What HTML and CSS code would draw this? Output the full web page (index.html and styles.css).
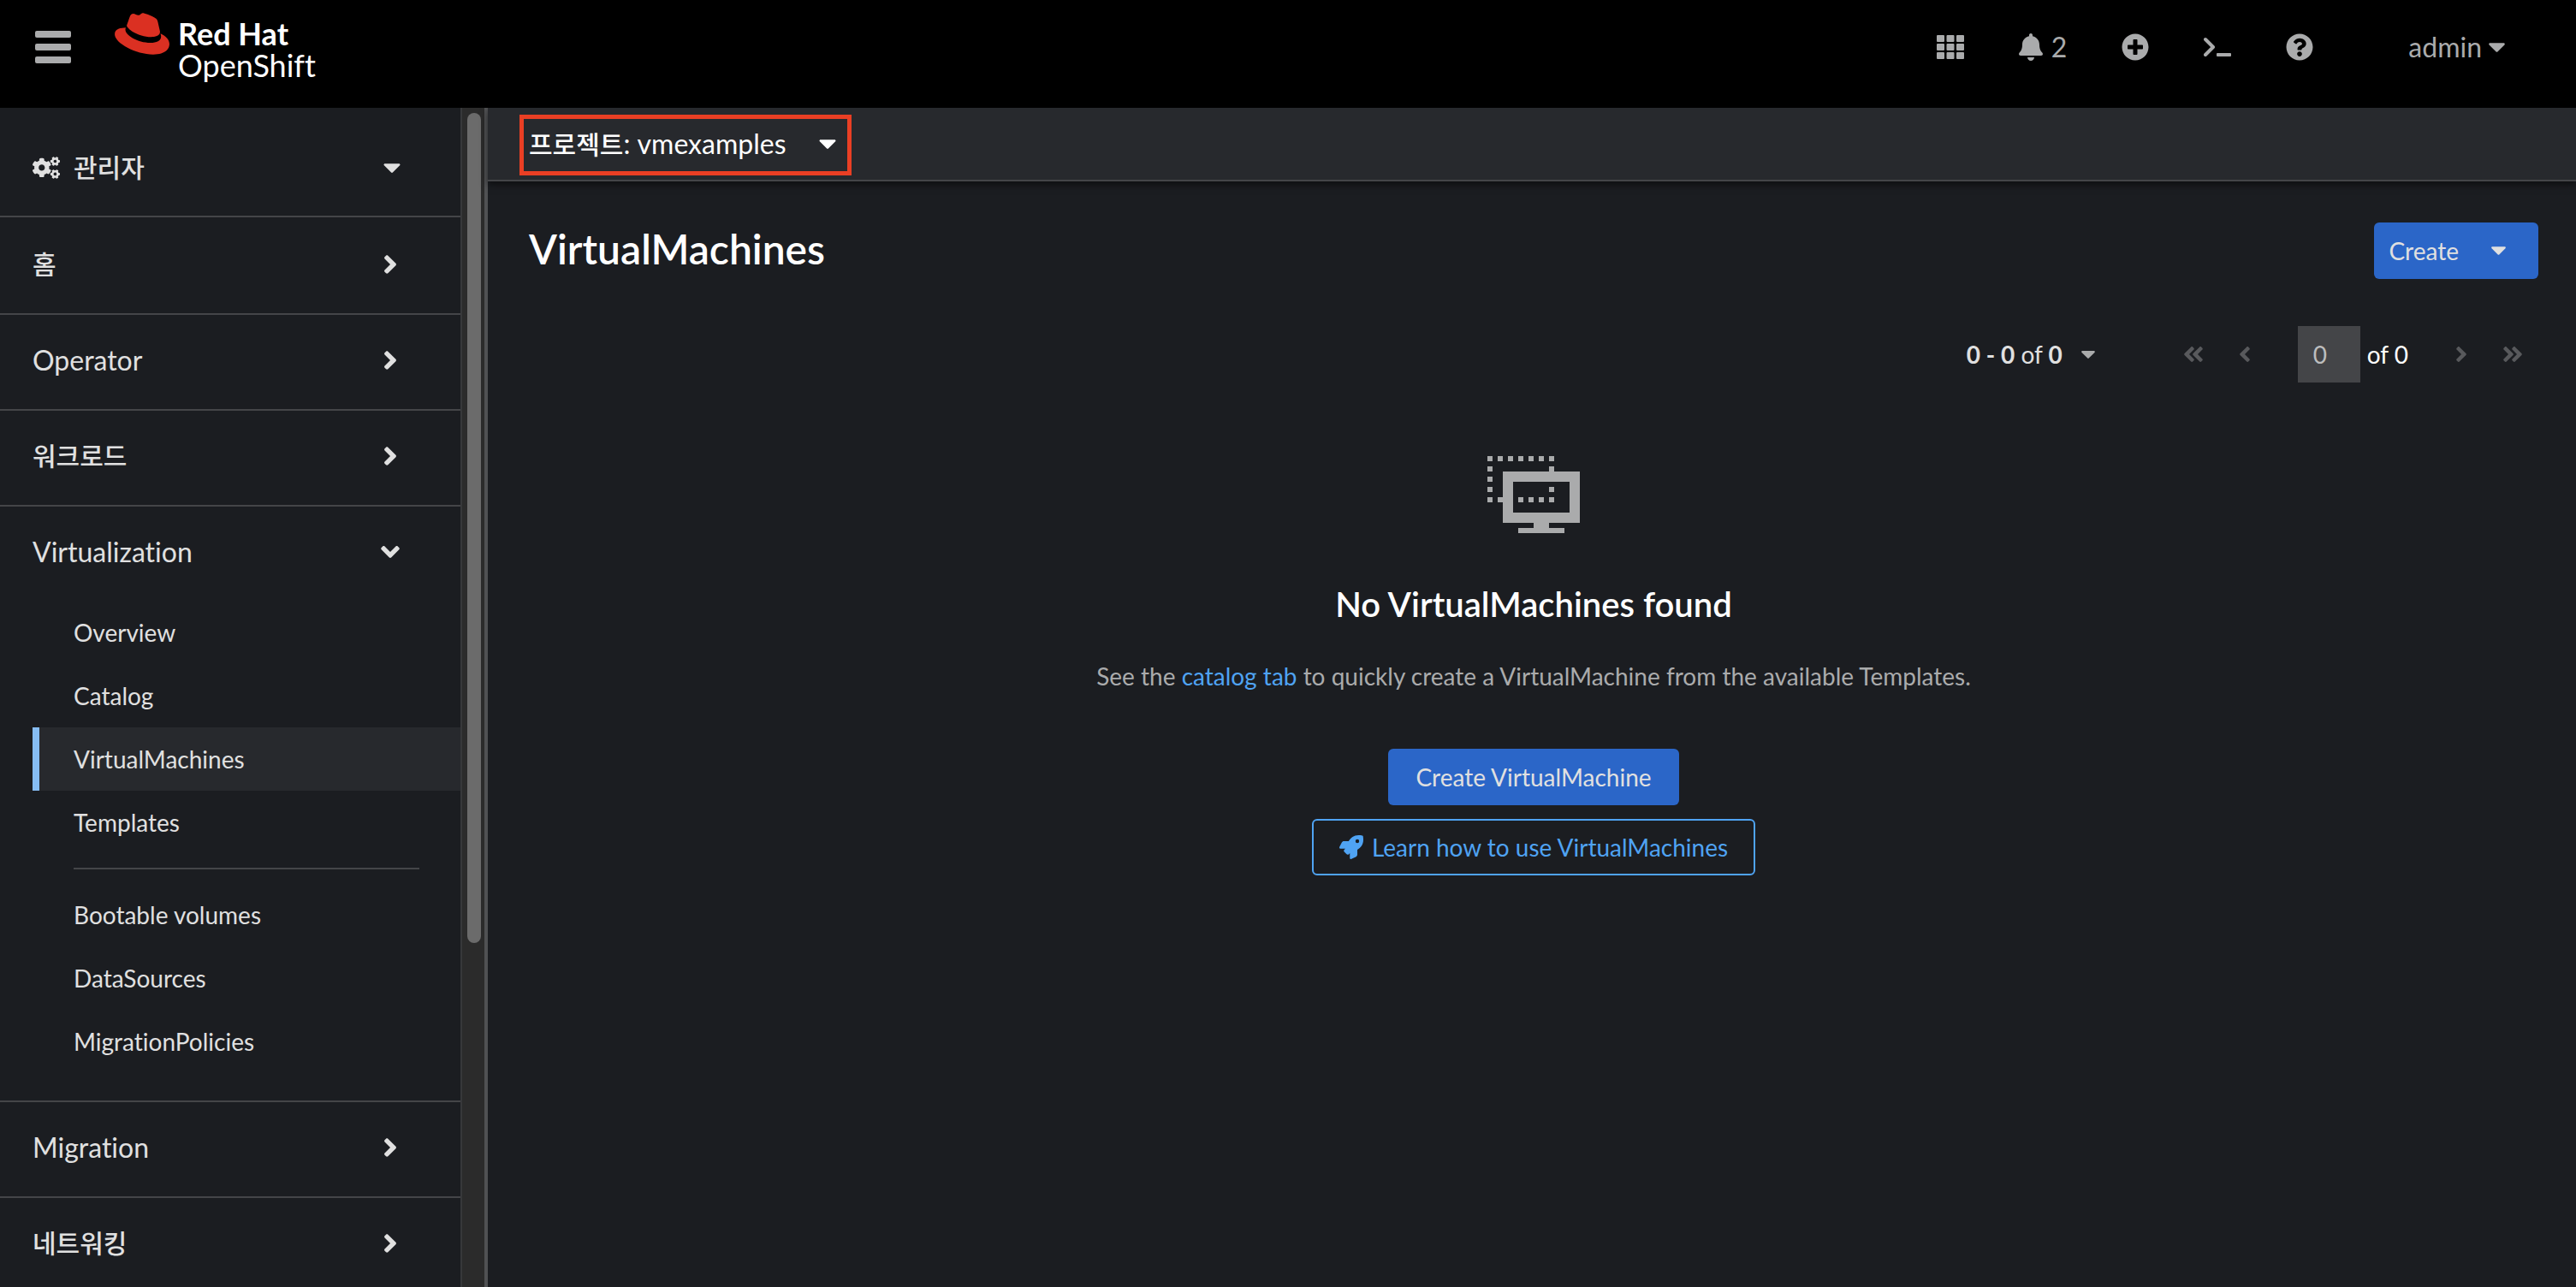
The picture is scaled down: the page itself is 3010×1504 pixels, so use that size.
FILE: index.html
```html
<!DOCTYPE html>
<html lang="ko">
<head>
<meta charset="utf-8">
<title>VirtualMachines · Red Hat OpenShift</title>
<meta name="viewport" content="width=device-width, initial-scale=1">
<link rel="stylesheet" href="styles.css">
</head>
<body>
<svg class="sprite" aria-hidden="true">
  <symbol id="caret" viewBox="8 190 304 172"><path d="M31.3 192h257.3c17.8 0 26.7 21.5 14.1 34.1L174.1 354.8c-7.8 7.8-20.5 7.8-28.3 0L17.2 226.1C4.6 213.5 13.5 192 31.3 192z"/></symbol>
  <symbol id="angle" viewBox="24 96 208 320"><path d="M224.3 273l-136 136c-9.4 9.4-24.6 9.4-33.9 0l-22.6-22.6c-9.4-9.4-9.4-24.6 0-33.9l96.4-96.4-96.4-96.4c-9.4-9.4-9.4-24.6 0-33.9L54.3 103c9.4-9.4 24.6-9.4 33.9 0l136 136c9.5 9.4 9.5 24.6.1 34z"/></symbol>
</svg>

<header class="masthead">
  <button class="menu-toggle" type="button" aria-label="Global navigation">
    <svg width="42" height="38" viewBox="0 0 42 38"><rect width="42" height="8" rx="2"/><rect y="15" width="42" height="8" rx="2"/><rect y="30" width="42" height="8" rx="2"/></svg>
  </button>
  <a class="brand" href="#" aria-label="Red Hat OpenShift">
    <svg class="brand-hat" width="64" height="49" viewBox="0 2.8 24 18.4"><path d="M16.009 13.386c1.577 0 3.86-.326 3.86-2.202a1.765 1.765 0 0 0-.04-.431l-.94-4.08c-.216-.898-.406-1.305-1.982-2.093-1.223-.625-3.888-1.658-4.676-1.658-.733 0-.947.946-1.822.946-.842 0-1.467-.706-2.255-.706-.757 0-1.25.515-1.63 1.576 0 0-1.06 2.99-1.197 3.424a.81.81 0 0 0-.028.245c0 1.162 4.577 4.974 10.71 4.974m4.101-1.435c.218 1.032.218 1.14.218 1.277 0 1.765-1.984 2.745-4.593 2.745-5.895.004-11.06-3.451-11.06-5.734a2.326 2.326 0 0 1 .19-.925C2.746 9.415 0 9.794 0 12.217c0 3.969 9.405 8.861 16.851 8.861 5.71 0 7.149-2.582 7.149-4.62 0-1.605-1.387-3.425-3.887-4.512"/></svg>
    <span class="brand-text"><strong>Red Hat</strong><span>OpenShift</span></span>
  </a>
  <div class="tools">
    <button class="tool" type="button" aria-label="Applications">
      <svg width="32" height="28" viewBox="0 0 32 28"><rect width="9" height="8" rx="1"/><rect x="11.500" width="9" height="8" rx="1"/><rect x="23" width="9" height="8" rx="1"/><rect y="10" width="9" height="8" rx="1"/><rect x="11.500" y="10" width="9" height="8" rx="1"/><rect x="23" y="10" width="9" height="8" rx="1"/><rect y="20" width="9" height="8" rx="1"/><rect x="11.500" y="20" width="9" height="8" rx="1"/><rect x="23" y="20" width="9" height="8" rx="1"/></svg>
    </button>
    <button class="tool" type="button" aria-label="Notifications, 2">
      <svg width="28" height="32" viewBox="0 0 448 512"><path d="M224 512c35.320 0 63.970-28.650 63.970-64H160.030c0 35.350 28.650 64 63.970 64zm215.390-149.710c-19.320-20.760-55.470-51.990-55.470-154.290 0-77.700-54.480-139.900-127.940-155.160V32c0-17.670-14.320-32-31.980-32s-31.980 14.330-31.980 32v20.840C118.560 68.100 64.080 130.300 64.080 208c0 102.300-36.150 133.530-55.470 154.290-6 6.450-8.660 14.160-8.610 21.710.110 16.400 12.980 32 32.100 32h383.800c19.120 0 32-15.600 32.100-32 .050-7.550-2.610-15.270-8.610-21.710z"/></svg>
      <span>2</span>
    </button>
    <button class="tool" type="button" aria-label="Quick create">
      <svg width="32" height="32" viewBox="0 0 512 512"><path d="M256 8C119 8 8 119 8 256s111 248 248 248 248-111 248-248S393 8 256 8zm144 276c0 6.600-5.400 12-12 12h-92v92c0 6.600-5.400 12-12 12h-56c-6.600 0-12-5.400-12-12v-92h-92c-6.600 0-12-5.400-12-12v-56c0-6.600 5.400-12 12-12h92v-92c0-6.600 5.400-12 12-12h56c6.600 0 12 5.400 12 12v92h92c6.600 0 12 5.400 12 12v56z"/></svg>
    </button>
    <button class="tool" type="button" aria-label="Command line terminal">
      <svg width="32" height="24" viewBox="0 0 32 24"><path class="stroke" d="M2 3l9 9-9 9"/><rect x="15" y="19" width="17" height="4" rx="1"/></svg>
    </button>
    <button class="tool" type="button" aria-label="Help">
      <svg width="32" height="32" viewBox="0 0 512 512"><path d="M504 256c0 136.997-111.043 248-248 248S8 392.997 8 256C8 119.083 119.043 8 256 8s248 111.083 248 248zM262.655 90c-54.497 0-89.255 22.957-116.549 63.758-3.536 5.286-2.353 12.415 2.715 16.258l34.699 26.310c5.205 3.947 12.621 3.008 16.665-2.122 17.864-22.658 30.113-35.797 57.303-35.797 20.429 0 45.698 13.148 45.698 32.958 0 14.976-12.363 22.667-32.534 33.976C247.128 238.528 216 254.941 216 296v4c0 6.627 5.373 12 12 12h56c6.627 0 12-5.373 12-12v-1.333c0-28.462 83.186-29.647 83.186-106.667 0-58.002-60.165-102-116.531-102zM256 338c-25.365 0-46 20.635-46 46 0 25.364 20.635 46 46 46s46-20.636 46-46c0-25.365-20.635-46-46-46z"/></svg>
    </button>
    <button class="tool user" type="button" aria-haspopup="menu"><span>admin</span><svg width="19" height="11"><use href="#caret"/></svg></button>
  </div>
</header>

<div class="shell">
  <nav class="sidebar" aria-label="Navigation">
    <button class="perspective" type="button" aria-haspopup="listbox">
      <svg width="32" height="26" viewBox="0 0 640 512"><path d="M512.100 191l-8.200 14.300c-3 5.300-9.400 7.500-15.100 5.400-11.800-4.400-22.600-10.700-32.100-18.600-4.600-3.800-5.800-10.500-2.800-15.700l8.200-14.300c-6.900-8-12.300-17.300-15.900-27.400h-16.500c-6 0-11.200-4.300-12.200-10.300-2-12-2.100-24.600 0-37.100 1-6 6.200-10.400 12.200-10.400h16.500c3.600-10.100 9-19.400 15.900-27.400l-8.200-14.300c-3-5.200-1.900-11.900 2.800-15.700 9.500-7.900 20.400-14.200 32.100-18.600 5.700-2.100 12.100.1 15.100 5.400l8.200 14.300c10.500-1.900 21.200-1.900 31.700 0L552 6.300c3-5.300 9.400-7.500 15.100-5.400 11.800 4.400 22.600 10.700 32.100 18.600 4.600 3.800 5.800 10.500 2.800 15.700l-8.200 14.300c6.900 8 12.300 17.300 15.900 27.400h16.500c6 0 11.200 4.300 12.200 10.300 2 12 2.100 24.600 0 37.100-1 6-6.200 10.400-12.200 10.400h-16.500c-3.600 10.100-9 19.400-15.900 27.400l8.200 14.300c3 5.200 1.900 11.900-2.800 15.700-9.500 7.900-20.400 14.200-32.100 18.600-5.700 2.100-12.100-.1-15.100-5.400l-8.200-14.300c-10.400 1.900-21.200 1.900-31.700 0zm-10.500-58.800c38.500 29.600 82.400-14.300 52.800-52.800-38.500-29.700-82.400 14.300-52.800 52.800zM386.300 286.100l33.700 16.800c10.100 5.800 14.500 18.100 10.500 29.100-8.900 24.200-26.400 46.400-42.600 65.800-7.400 8.900-20.200 11.100-30.300 5.300l-29.100-16.800c-16 13.700-34.600 24.600-54.900 31.700v33.600c0 11.600-8.300 21.600-19.700 23.600-24.600 4.200-50.400 4.400-75.900 0-11.500-2-20-11.900-20-23.600V418c-20.300-7.200-38.900-18-54.900-31.700L74 403c-10 5.800-22.900 3.600-30.300-5.300-16.200-19.400-33.300-41.600-42.200-65.700-4-10.900.4-23.200 10.500-29.100l33.300-16.800c-3.900-20.900-3.900-42.400 0-63.400L12 205.800c-10.100-5.800-14.600-18.100-10.500-29 8.900-24.200 26-46.400 42.200-65.800 7.400-8.900 20.200-11.100 30.300-5.300l29.100 16.800c16-13.700 34.600-24.600 54.900-31.700V57.100c0-11.500 8.200-21.500 19.600-23.500 24.600-4.200 50.500-4.400 76-.1 11.500 2 20 11.900 20 23.600v33.600c20.300 7.200 38.900 18 54.900 31.700l29.100-16.800c10-5.800 22.900-3.600 30.300 5.300 16.200 19.400 33.200 41.600 42.100 65.800 4 10.900.1 23.200-10 29.100l-33.700 16.800c3.900 21 3.900 42.500 0 63.500zm-117.600 21.100c59.200-77-28.700-164.900-105.700-105.700-59.200 77 28.700 164.900 105.700 105.700zm243.400 182.700l-8.200 14.300c-3 5.300-9.400 7.500-15.100 5.400-11.800-4.400-22.600-10.700-32.100-18.600-4.600-3.800-5.800-10.500-2.800-15.700l8.200-14.300c-6.900-8-12.300-17.300-15.900-27.400h-16.500c-6 0-11.200-4.300-12.200-10.300-2-12-2.100-24.600 0-37.100 1-6 6.200-10.400 12.200-10.400h16.500c3.600-10.100 9-19.400 15.900-27.400l-8.200-14.300c-3-5.200-1.900-11.900 2.800-15.700 9.500-7.900 20.400-14.200 32.100-18.600 5.700-2.100 12.100.1 15.100 5.400l8.200 14.300c10.500-1.900 21.200-1.900 31.700 0l8.200-14.300c3-5.300 9.400-7.500 15.100-5.400 11.800 4.400 22.600 10.700 32.100 18.600 4.600 3.800 5.800 10.500 2.800 15.700l-8.200 14.300c6.900 8 12.300 17.300 15.900 27.400h16.500c6 0 11.200 4.300 12.200 10.300 2 12 2.100 24.600 0 37.100-1 6-6.200 10.400-12.200 10.400h-16.500c-3.600 10.100-9 19.400-15.900 27.400l8.200 14.300c3 5.200 1.900 11.900-2.800 15.700-9.500 7.900-20.400 14.200-32.100 18.600-5.700 2.100-12.100-.1-15.100-5.400l-8.200-14.300c-10.400 1.900-21.200 1.900-31.700 0zM501.600 431c38.500 29.600 82.400-14.300 52.800-52.800-38.500-29.600-82.400 14.300-52.800 52.800z"/></svg>
      <span class="ko">관리자</span>
      <svg class="perspective-caret" width="20" height="11"><use href="#caret"/></svg>
    </button>
    <ul class="nav-list">
      <li class="nav-section"><button type="button" aria-expanded="false"><span class="ko">홈</span><svg class="chevron" width="14" height="22"><use href="#angle"/></svg></button></li>
      <li class="nav-section"><button type="button" aria-expanded="false"><span>Operator</span><svg class="chevron" width="14" height="22"><use href="#angle"/></svg></button></li>
      <li class="nav-section"><button type="button" aria-expanded="false"><span class="ko">워크로드</span><svg class="chevron" width="14" height="22"><use href="#angle"/></svg></button></li>
      <li class="nav-section">
        <button type="button" aria-expanded="true"><span>Virtualization</span><svg class="chevron" width="14" height="22"><use href="#angle"/></svg></button>
        <ul class="subnav">
          <li><a href="#">Overview</a></li>
          <li><a href="#">Catalog</a></li>
          <li><a href="#" aria-current="page">VirtualMachines</a></li>
          <li><a href="#">Templates</a></li>
          <li class="divider" role="separator"></li>
          <li><a href="#">Bootable volumes</a></li>
          <li><a href="#">DataSources</a></li>
          <li><a href="#">MigrationPolicies</a></li>
        </ul>
      </li>
      <li class="nav-section"><button type="button" aria-expanded="false"><span>Migration</span><svg class="chevron" width="14" height="22"><use href="#angle"/></svg></button></li>
      <li class="nav-section"><button type="button" aria-expanded="false"><span class="ko">네트워킹</span><svg class="chevron" width="14" height="22"><use href="#angle"/></svg></button></li>
    </ul>
  </nav>
  <div class="scrollbar" aria-hidden="true"><div class="scrollbar-thumb"></div></div>

  <div class="content">
    <div class="project-bar">
      <button class="project-select" type="button" aria-haspopup="listbox"><span><span class="ko">프로젝트</span>: vmexamples</span><svg width="20" height="11"><use href="#caret"/></svg></button>
    </div>
    <main class="page">
      <div class="page-head">
        <h1>VirtualMachines</h1>
        <button class="btn create" type="button" aria-haspopup="menu"><span>Create</span><svg width="17" height="10"><use href="#caret"/></svg></button>
      </div>
      <div class="pagination">
        <button class="page-range" type="button" aria-haspopup="menu"><span><b>0 - 0</b> of <b>0</b></span><svg width="16" height="9"><use href="#caret"/></svg></button>
        <div class="pager">
          <button class="step back" type="button" disabled aria-label="First page"><svg width="12" height="18"><use href="#angle"/></svg><svg width="12" height="18"><use href="#angle"/></svg></button>
          <button class="step back" type="button" disabled aria-label="Previous page"><svg width="12" height="18"><use href="#angle"/></svg></button>
          <label class="current"><input type="text" value="0" aria-label="Current page"><span>of 0</span></label>
          <button class="step" type="button" disabled aria-label="Next page"><svg width="12" height="18"><use href="#angle"/></svg></button>
          <button class="step" type="button" disabled aria-label="Last page"><svg width="12" height="18"><use href="#angle"/></svg><svg width="12" height="18"><use href="#angle"/></svg></button>
        </div>
      </div>
      <section class="empty">
        <svg class="empty-icon" width="108" height="90" viewBox="0 0 108 90">
          <path d="M3 0v54" class="dots"/><path d="M75 0v54" class="dots"/>
          <path d="M0 3h78" class="dots"/><path d="M0 51h78" class="dots"/>
          <path fill-rule="evenodd" d="M18 18h90v60H72v6h18v6H36v-6h18v-6H18zM30 30v36h66V30z"/>
        </svg>
        <h2>No VirtualMachines found</h2>
        <p>See the <a href="#">catalog tab</a> to quickly create a VirtualMachine from the available Templates.</p>
        <div class="actions">
          <button class="btn" type="button">Create VirtualMachine</button>
          <button class="btn outlined" type="button">
            <svg width="28" height="28" viewBox="0 0 512 512"><path d="M505.120 19.094c-1.189-5.531-6.658-11-12.207-12.188C460.716 0 435.507 0 410.407 0 307.175 0 245.269 55.203 199.052 128H94.838c-16.348.016-35.557 11.875-42.887 26.484L2.516 253.297A28.400 28.400 0 0 0 0 264a24.009 24.009 0 0 0 24.006 24h103.810l-22.475 22.469c-11.365 11.361-12.996 32.258 0 45.250l50.905 50.906c11.156 11.188 32.156 13.156 45.277 0l22.475-22.469V488a24.009 24.009 0 0 0 24.006 24 28.559 28.559 0 0 0 10.707-2.516l98.728-49.391c14.629-7.297 26.508-26.500 26.508-42.859V312.797c72.598-46.313 128.035-108.406 128.035-211.094.093-25.203.093-50.406-6.862-82.609zM384.040 168A40 40 0 1 1 424.050 128 40.023 40.023 0 0 1 384.040 168z"/></svg>
            <span>Learn how to use VirtualMachines</span>
          </button>
        </div>
      </section>
    </main>
  </div>
</div>
</body>
</html>
```
FILE: styles.css
```css
:root {
  --bg: #1b1d21;
  --bg-raised: #27292d;
  --line: #444548;
  --text: #e0e0e0;
  --muted: #aaabac;
  --blue: #2b66c8;
  --link: #4fa3f3;
}

* { box-sizing: border-box; }

body {
  margin: 0;
  height: 100vh;
  display: flex;
  flex-direction: column;
  overflow: hidden;
  background: var(--bg);
  color: var(--text);
  font: 28px/42px Lato, "Noto Sans CJK KR", sans-serif;
  font-variant-ligatures: none;
}

button, input {
  margin: 0;
  padding: 0;
  border: 0;
  background: none;
  color: inherit;
  font: inherit;
}

svg { display: block; flex: none; fill: currentColor; }
ul { margin: 0; padding: 0; list-style: none; }
h1, h2, p { margin: 0; }
h1, h2 { color: #fff; font-weight: 600; }
a { color: var(--link); text-decoration: none; }

.sprite { position: absolute; width: 0; height: 0; }
.ko { font-family: "Noto Sans CJK KR", sans-serif; font-size: 30px; font-weight: 500; line-height: 36px; }

/* Masthead */
.masthead {
  flex: none;
  display: flex;
  align-items: center;
  height: 126px;
  padding: 0 83px 16px 41px;
  background: #000;
  color: var(--muted);
  font-size: 32px;
}
.brand {
  display: flex;
  gap: 10px;
  margin-left: 51px;
  color: #fff;
  font-size: 36px;
  line-height: 37px;
}
.brand-hat { color: #db3022; }
.brand-text { display: flex; flex-direction: column; padding-top: 6px; }
.tools { display: flex; align-items: center; gap: 64px; margin-left: auto; }
.tool { display: flex; align-items: center; gap: 10px; }
.user { gap: 8px; margin-left: 47px; }
.stroke { fill: none; stroke: currentColor; stroke-width: 4; stroke-linecap: round; stroke-linejoin: round; }

/* Shell */
.shell { flex: 1; display: flex; min-height: 0; }
.sidebar { flex: none; width: 538px; overflow: hidden; font-size: 32px; }
.scrollbar {
  flex: none;
  width: 32px;
  padding: 6px 4px 6px 6px;
  border-left: 2px solid #37383a;
  border-right: 4px solid #505153;
  background: #2b2b2b;
}
.scrollbar-thumb { width: 16px; height: 71%; border-radius: 8px; background: #6b6b6b; }

/* Sidebar */
.perspective, .nav-section > button { display: flex; align-items: center; width: 100%; }
.perspective { gap: 16px; height: 126px; padding: 14px 70px 0 38px; }
.perspective-caret { margin-left: auto; }
.perspective .ko, .nav-section .ko { padding-bottom: 4px; }
.nav-list { border-top: 2px solid var(--line); }
.nav-section { border-bottom: 2px solid var(--line); }
.nav-section > button { justify-content: space-between; height: 110px; padding: 0 75px 4px 38px; }
.nav-section:first-child { padding-top: 2px; }
.nav-section [aria-expanded="true"] .chevron { transform: rotate(90deg); }
.subnav { padding-bottom: 32px; font-size: 28px; }
.subnav a { display: block; margin-left: 38px; padding: 16px 40px; border-left: 8px solid transparent; color: var(--text); }
.subnav [aria-current] { border-color: #86bdf4; background: var(--bg-raised); }
.divider { height: 2px; margin: 16px 48px 16px 86px; background: var(--line); }

/* Project bar */
.content { flex: 1; min-width: 0; }
.project-bar {
  display: flex;
  padding: 8px 37px 5px;
  border-bottom: 2px solid var(--line);
  background: var(--bg-raised);
  box-shadow: 0 4px 8px rgb(0 0 0 / 50%);
}
.project-select {
  display: flex;
  align-items: center;
  justify-content: space-between;
  gap: 38px;
  padding: 8px 13px 11px 6px;
  border: 5px solid #ea3f24;
  color: #fff;
  font-size: 32px;
}

/* Page */
.page { padding: 48px 44px 48px 48px; }
.page-head { display: flex; align-items: center; justify-content: space-between; }
h1 { padding-bottom: 4px; font-size: 48px; line-height: 62px; }
.btn {
  display: flex;
  align-items: center;
  justify-content: center;
  gap: 10px;
  padding: 12px 32px;
  border-radius: 6px;
  background: var(--blue);
}
.create { gap: 38px; padding: 12px 38px 12px 17px; }
.outlined { padding: 10px 30px; border: 2px solid var(--link); background: none; color: var(--link); }

.pagination { display: flex; align-items: center; justify-content: flex-end; gap: 85px; margin-top: 55px; }
.page-range { display: flex; align-items: center; gap: 22px; }
.page-range svg { color: var(--muted); }
.pager { display: flex; align-items: center; }
.step { display: flex; justify-content: center; width: 60px; color: #58595c; }
.step svg + svg { margin-left: -2px; }
.back svg { transform: scaleX(-1); }
.current { display: flex; align-items: center; gap: 8px; margin: 0 32px; color: #fff; }
.current input { width: 73px; height: 66px; padding-left: 18px; background: #444548; color: #bcbdbe; }

/* Empty state */
.empty { display: flex; flex-direction: column; align-items: center; margin-top: 86px; color: var(--muted); text-align: center; }
.dots { fill: none; stroke: currentColor; stroke-width: 6; stroke-dasharray: 6; }
h2 { margin-top: 57px; font-size: 40px; line-height: 52px; }
.empty p { margin-top: 37px; }
.actions { display: flex; flex-direction: column; align-items: center; gap: 16px; margin-top: 64px; color: var(--text); }
```
